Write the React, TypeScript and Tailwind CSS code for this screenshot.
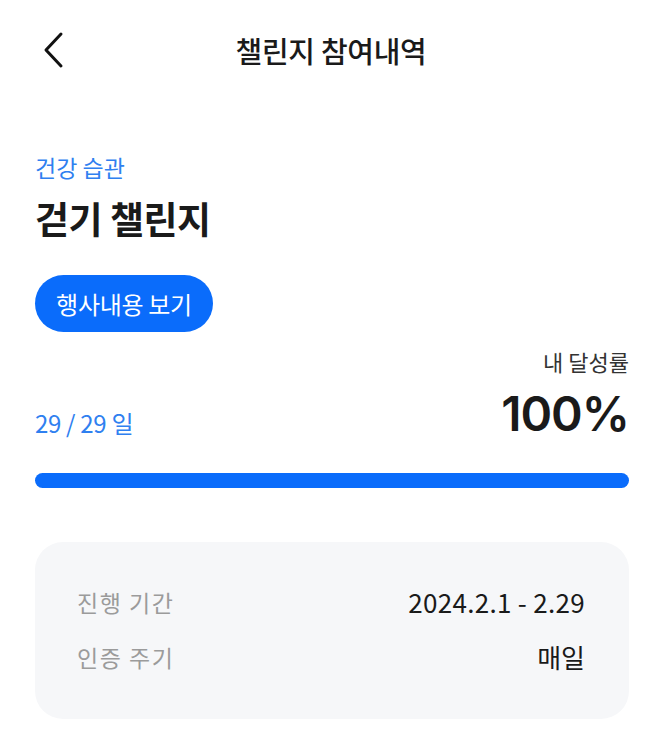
import React from "react";

const App: React.FC = () => {
  return (
    <div
      className="w-[654px] min-h-[741px] bg-white text-[#1a1a1a]"
      style={{ fontFamily: '"Noto Sans CJK KR", "Noto Sans", sans-serif' }}
    >
      {/* Header */}
      <div className="relative h-[100px] flex items-center justify-center">
        <button className="absolute left-[42px] top-[31px] w-[22px] h-[38px] flex items-center">
          <svg width="22" height="38" viewBox="0 0 22 38" fill="none">
            <path
              d="M19 3 L4 19 L19 35"
              stroke="#111"
              strokeWidth="3"
              strokeLinecap="round"
              strokeLinejoin="round"
            />
          </svg>
        </button>
        <h1 className="ml-[8px] text-[29px] font-medium tracking-[-0.3px] leading-none">챌린지 참여내역</h1>
      </div>

      {/* Challenge info */}
      <div className="pl-[35px] pr-[25px] pt-[52px]">
        <p className="text-[23px] leading-[30px] text-[#2f80f0]">건강 습관</p>
        <h2 className="mt-[14px] text-[37px] leading-[44px] font-bold tracking-[-0.5px]">걷기 챌린지</h2>
        <button className="mt-[35px] h-[57px] w-[178px] rounded-full bg-[#0a6cfb] text-white text-[24px] tracking-[-0.3px]">
          행사내용 보기
        </button>

        {/* Progress */}
        <div className="mt-[14px] flex items-end justify-between">
          <p className="text-[24px] leading-[30px] text-[#2f80f0] tracking-[-0.3px]">29 / 29 일</p>
          <div className="flex flex-col items-end">
            <p className="text-[22px] leading-[30px] text-[#333]">내 달성률</p>
            <p
              className="mt-[14px] text-[48px] leading-[48px] font-semibold tracking-[-1px] text-[#1a1a1a]"
              style={{ fontFamily: '"Inter", "Noto Sans", sans-serif' }}
            >
              100%
            </p>
          </div>
        </div>
        <div className="mt-[35px] h-[15px] rounded-full bg-[#0a6cfb]" />

        {/* Details card */}
        <div className="mt-[54px] rounded-[28px] bg-[#f6f7f9] pl-[42px] pr-[44px] pt-[44px] pb-[46px] flex flex-col gap-[23px]">
          <div className="flex items-center justify-between leading-[32px]">
            <span className="text-[23px] tracking-[1.5px] text-[#9b9b9b]">진행 기간</span>
            <span className="text-[26px] tracking-[0.3px] text-[#1a1a1a]">2024.2.1 - 2.29</span>
          </div>
          <div className="flex items-center justify-between leading-[32px]">
            <span className="text-[23px] tracking-[1.5px] text-[#9b9b9b]">인증 주기</span>
            <span className="text-[26px] text-[#1a1a1a]">매일</span>
          </div>
        </div>
      </div>
    </div>
  );
};

export default App;
